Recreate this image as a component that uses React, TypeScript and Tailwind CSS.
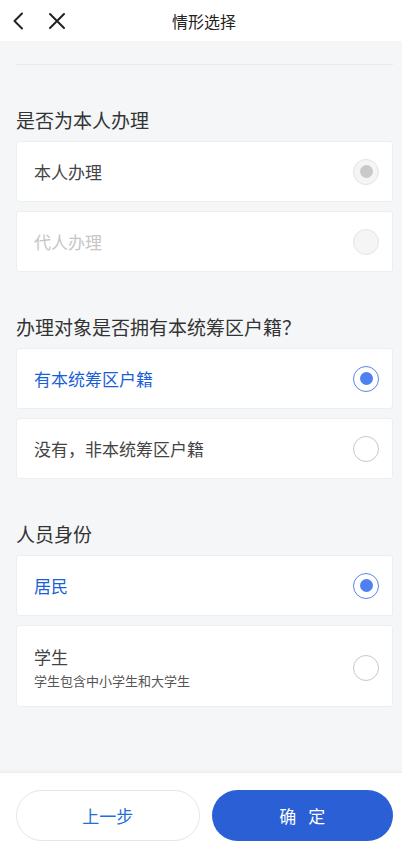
import React, { useState } from "react";

type Option = {
  label: string;
  desc?: string;
  disabled?: boolean;
};

type Section = {
  title: string;
  options: Option[];
};

const sections: Section[] = [
  {
    title: "是否为本人办理",
    options: [{ label: "本人办理", disabled: true }, { label: "代人办理", disabled: true }],
  },
  {
    title: "办理对象是否拥有本统筹区户籍？",
    options: [{ label: "有本统筹区户籍" }, { label: "没有，非本统筹区户籍" }],
  },
  {
    title: "人员身份",
    options: [{ label: "居民" }, { label: "学生", desc: "学生包含中小学生和大学生" }],
  },
];

const font = { fontFamily: '"Noto Sans CJK SC", "Noto Sans", sans-serif' };

function Radio({ checked, disabled }: { checked: boolean; disabled?: boolean }) {
  if (disabled) {
    return (
      <span className="flex h-[26px] w-[26px] items-center justify-center rounded-full border border-[#e4e4e4] bg-[#f5f5f5]">
        {checked && <span className="h-[13px] w-[13px] rounded-full bg-[#c9c9c9]" />}
      </span>
    );
  }
  return (
    <span
      className={`flex h-[26px] w-[26px] items-center justify-center rounded-full border ${
        checked ? "border-[#5a84ee]" : "border-[#c8c8c8]"
      }`}
    >
      {checked && <span className="h-[13px] w-[13px] rounded-full bg-[#4f80f2]" />}
    </span>
  );
}

export default function App() {
  // selected index per section
  const [picked, setPicked] = useState<number[]>([0, 0, 0]);

  const choose = (s: number, i: number) => {
    const next = [...picked];
    next[s] = i;
    setPicked(next);
  };

  return (
    <div className="flex h-[848px] w-[402px] flex-col bg-[#f5f6f8]" style={font}>
      {/* Header */}
      <div className="relative flex h-[41px] shrink-0 items-center justify-center bg-white">
        <div className="absolute left-[12px] top-[12px] flex items-center gap-[24px]">
          <svg width="12" height="18" viewBox="0 0 12 18" fill="none">
            <path d="M10 1.5 L2.5 9 L10 16.5" stroke="#222" strokeWidth="2" strokeLinecap="round" strokeLinejoin="round" />
          </svg>
          <svg width="18" height="18" viewBox="0 0 18 18" fill="none">
            <path d="M2 2 L16 16 M16 2 L2 16" stroke="#222" strokeWidth="2" strokeLinecap="round" />
          </svg>
        </div>
        <span className="ml-[6px] text-[16px] leading-[22px] text-[#222]">情形选择</span>
      </div>

      {/* Content */}
      <div className="flex-1 pl-[16px] pr-[9px]">
        <div className="mt-[23px] h-px bg-[#e8e9ec]" />
        {sections.map((sec, s) => (
          <div key={sec.title}>
            <div className="mt-[42px] mb-[8px] text-[19px] leading-[26px] text-[#333]">{sec.title}</div>
            <div className="flex flex-col gap-[9px]">
              {sec.options.map((opt, i) => {
                const checked = picked[s] === i;
                const color = opt.disabled
                  ? checked
                    ? "text-[#444]"
                    : "text-[#c6c6c6]"
                  : checked
                  ? "text-[#1a5fd6]"
                  : "text-[#444]";
                return (
                  <div
                    key={opt.label}
                    onClick={() => !opt.disabled && choose(s, i)}
                    className={`flex items-center justify-between rounded-[3px] border border-[#edeef0] bg-white pl-[17px] pr-[13px] ${
                      opt.desc ? "pt-[19px] pb-[16px]" : "h-[61px]"
                    }`}
                  >
                    <div>
                      <div className={`text-[17px] leading-[24px] ${color}`}>{opt.label}</div>
                      {opt.desc && (
                        <div className="mt-[3px] text-[13px] leading-[18px] text-[#555]">{opt.desc}</div>
                      )}
                    </div>
                    <Radio checked={checked} disabled={opt.disabled} />
                  </div>
                );
              })}
            </div>
          </div>
        ))}
      </div>

      {/* Footer */}
      <div className="flex shrink-0 gap-[12px] border-t border-[#eeeeee] bg-white pl-[16px] pr-[9px] pt-[17px] pb-[7px] shadow-[0_-1px_3px_rgba(0,0,0,0.03)]">
        <button className="flex h-[51px] flex-1 items-center justify-center rounded-full border border-[#e6e6e6] bg-white text-[17px] text-[#1f6fd6]">
          上一步
        </button>
        <button className="flex h-[51px] flex-1 items-center justify-center gap-[12px] rounded-full bg-[#2a5fd6] text-[17px] text-white">
          <span>确</span>
          <span>定</span>
        </button>
      </div>
    </div>
  );
}
